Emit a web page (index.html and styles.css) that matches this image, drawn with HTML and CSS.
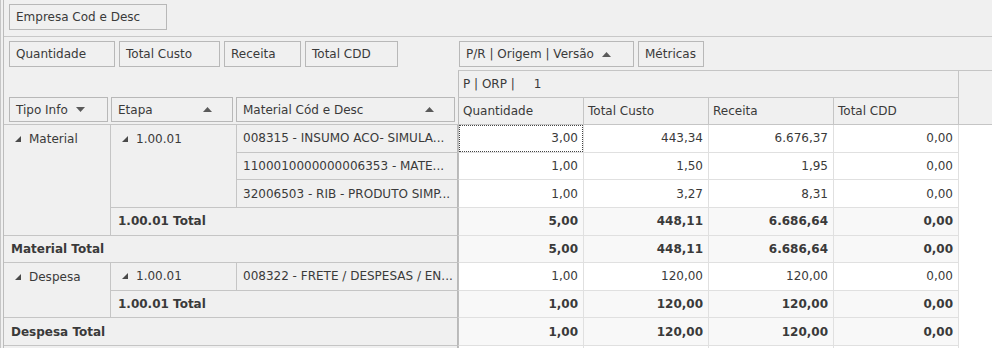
FILE: index.html
```html
<!DOCTYPE html>
<html>
<head>
<meta charset="utf-8">
<link rel="stylesheet" href="styles.css">
</head>
<body>
<div class="pivot">
  <div class="grid">
    <div class="filter-area">
      <div class="fbtn w-empresa">Empresa Cod e Desc</div>
    </div>

    <div class="data-fields">
      <div class="fbtn w-qtd">Quantidade</div>
      <div class="fbtn w-custo">Total Custo</div>
      <div class="fbtn w-receita">Receita</div>
      <div class="fbtn w-cdd">Total CDD</div>
    </div>

    <div class="col-fields">
      <div class="fbtn w-pr">P/R | Origem | Versão
        <svg class="sort after" width="9" height="5" viewBox="0 0 9 5"><polygon points="0,5 4.5,0 9,5" /></svg>
      </div>
      <div class="fbtn w-metricas">Métricas</div>
    </div>

    <div class="row-fields">
      <div class="fbtn rbtn w-tipo">Tipo Info
        <svg class="sort after" width="9" height="5" viewBox="0 0 9 5"><polygon points="0,0 9,0 4.5,5" /></svg>
      </div>
      <div class="fbtn rbtn w-etapa">Etapa
        <svg class="sort end" width="9" height="5" viewBox="0 0 9 5"><polygon points="0,5 4.5,0 9,5" /></svg>
      </div>
      <div class="fbtn rbtn w-material">Material Cód e Desc
        <svg class="sort end" width="9" height="5" viewBox="0 0 9 5"><polygon points="0,5 4.5,0 9,5" /></svg>
      </div>
    </div>

    <div class="ch-top">P | ORP |<span class="ch-val">1</span></div>
    <div class="ch-gt"></div>

    <!-- row header area -->
    <div class="rh top pos-mat"><div class="lbl"><svg class="exp" width="6" height="6" viewBox="0 0 6 6"><polygon points="6,0 6,6 0,6" /></svg>Material</div></div>
    <div class="rh top pos-et1"><div class="lbl"><svg class="exp" width="6" height="6" viewBox="0 0 6 6"><polygon points="6,0 6,6 0,6" /></svg>1.00.01</div></div>
    <div class="rh mat pos-m1">008315 - INSUMO ACO- SIMULA...</div>
    <div class="rh mat pos-m2">1100010000000006353 - MATE...</div>
    <div class="rh mat pos-m3">32006503 - RIB - PRODUTO SIMP...</div>
    <div class="rh mat tot pos-ett1">1.00.01 Total</div>
    <div class="rh mat tot pos-matt">Material Total</div>
    <div class="rh top pos-desp"><div class="lbl"><svg class="exp" width="6" height="6" viewBox="0 0 6 6"><polygon points="6,0 6,6 0,6" /></svg>Despesa</div></div>
    <div class="rh pos-et2"><svg class="exp" width="6" height="6" viewBox="0 0 6 6"><polygon points="6,0 6,6 0,6" /></svg>1.00.01</div>
    <div class="rh mat pos-m4">008322 - FRETE / DESPESAS / EN...</div>
    <div class="rh mat tot pos-ett2">1.00.01 Total</div>
    <div class="rh mat tot pos-despt">Despesa Total</div>
    <div class="rh mat last pos-next"></div>

    <!-- measure headers (row 4) -->
    <div class="mh first">Quantidade</div>
    <div class="mh">Total Custo</div>
    <div class="mh">Receita</div>
    <div class="mh">Total CDD</div>

    <!-- data rows -->
    <div class="d first focus">3,00</div><div class="d">443,34</div><div class="d">6.676,37</div><div class="d">0,00</div><div class="gt"></div>
    <div class="d first">1,00</div><div class="d">1,50</div><div class="d">1,95</div><div class="d">0,00</div><div class="gt"></div>
    <div class="d first">1,00</div><div class="d">3,27</div><div class="d">8,31</div><div class="d">0,00</div><div class="gt"></div>
    <div class="d first tot">5,00</div><div class="d tot">448,11</div><div class="d tot">6.686,64</div><div class="d tot">0,00</div><div class="gt"></div>
    <div class="d first tot">5,00</div><div class="d tot">448,11</div><div class="d tot">6.686,64</div><div class="d tot">0,00</div><div class="gt"></div>
    <div class="d first">1,00</div><div class="d">120,00</div><div class="d">120,00</div><div class="d">0,00</div><div class="gt"></div>
    <div class="d first tot">1,00</div><div class="d tot">120,00</div><div class="d tot">120,00</div><div class="d tot">0,00</div><div class="gt"></div>
    <div class="d first tot">1,00</div><div class="d tot">120,00</div><div class="d tot">120,00</div><div class="d tot">0,00</div><div class="gt"></div>
    <div class="d first last"></div><div class="d last"></div><div class="d last"></div><div class="d last"></div><div class="gt"></div>
  </div>
</div>
</body>
</html>
```

FILE: styles.css
```css
* { box-sizing: border-box; }

html, body {
  margin: 0;
  padding: 0;
}

body {
  width: 992px;
  height: 348px;
  overflow: hidden;
  background: #f0f0f0;
  font-family: "DejaVu Sans", Verdana, sans-serif;
  font-size: 12px;
  color: #3a3a3a;
}

.pivot {
  height: 348px;
  border-left: 1px solid #c6c6c6;
  padding-left: 2px;
}

.grid {
  display: grid;
  height: 100%;
  border-left: 1px solid #bcbcbc;
  grid-template-columns: 107px 126px 221px 126px 125px 125px 125px 1fr;
  grid-template-rows: 37px 33px 28px 27px repeat(8, 27.625px) 2px;
}

/* ---------- field buttons ---------- */
.fbtn {
  height: 26px;
  border: 1px solid #b8b8b8;
  background: #f0f0f0;
  display: flex;
  align-items: center;
  padding: 0 6px;
  white-space: nowrap;
  flex: none;
}
.rbtn { height: 25px; }

.sort { fill: #5a5a5a; flex: none; }
.sort.after { margin-left: 8px; }
.sort.end { margin-left: auto; margin-right: 14px; }

.w-empresa { width: 158px; }
.w-qtd { width: 106px; }
.w-custo { width: 101px; }
.w-receita { width: 77px; }
.w-cdd { width: 93px; }
.w-pr { width: 175px; }
.w-metricas { width: 66px; }
.w-tipo { width: 99px; }
.w-etapa { width: 122px; }
.w-material { width: 219px; }

.filter-area {
  grid-column: 1 / -1;
  grid-row: 1;
  border-bottom: 1px solid #c8c8c8;
  padding: 4px 0 0 5px;
  display: flex;
  align-items: flex-start;
}

.data-fields {
  grid-column: 1 / 4;
  grid-row: 2;
  display: flex;
  align-items: flex-start;
  gap: 4px;
  padding: 4px 0 0 5px;
}

.col-fields {
  grid-column: 4 / -1;
  grid-row: 2;
  display: flex;
  align-items: flex-start;
  gap: 4px;
  padding: 4px 0 0 1px;
}

.row-fields {
  grid-column: 1 / 4;
  grid-row: 3 / 5;
  display: flex;
  align-items: flex-end;
  gap: 3px;
  padding: 0 0 2px 5px;
  border-bottom: 1px solid #c5c5c5;
}

/* ---------- column header area ---------- */
.ch-top {
  grid-column: 4 / 8;
  grid-row: 3;
  border-top: 1px solid #c5c5c5;
  border-left: 1px solid #bdbdbd;
  border-right: 1px solid #c5c5c5;
  border-bottom: 1px solid #c5c5c5;
  display: flex;
  align-items: center;
  padding-left: 4px;
  white-space: pre;
}
.ch-val { margin-left: 19px; }

.ch-gt {
  grid-column: 8;
  grid-row: 3 / 5;
  border-top: 1px solid #c5c5c5;
  border-bottom: 1px solid #c5c5c5;
}

.mh {
  border-right: 1px solid #c5c5c5;
  border-bottom: 1px solid #c5c5c5;
  display: flex;
  align-items: center;
  padding-left: 4px;
  white-space: nowrap;
}
.mh.first { border-left: 1px solid #bdbdbd; }

/* ---------- row header cells ---------- */
.rh {
  background: #f0f0f0;
  border-right: 1px solid #c5c5c5;
  border-bottom: 1px solid #c5c5c5;
  display: flex;
  align-items: center;
  padding: 0 6px 0 11px;
  white-space: nowrap;
  overflow: hidden;
}
.rh.top { align-items: flex-start; }
.rh .lbl {
  height: 27px;
  display: flex;
  align-items: center;
}
.exp { fill: #4a4a4a; margin-right: 8px; flex: none; }

.rh.mat {
  border-right-color: #b9b9b9;
  padding-left: 6px;
}
.rh.tot { font-weight: bold; padding-left: 7px; }

.pos-mat { grid-column: 1; grid-row: 5 / 9; }
.pos-et1 { grid-column: 2; grid-row: 5 / 8; }
.pos-m1 { grid-column: 3; grid-row: 5; }
.pos-m2 { grid-column: 3; grid-row: 6; }
.pos-m3 { grid-column: 3; grid-row: 7; }
.pos-ett1 { grid-column: 2 / 4; grid-row: 8; padding-left: 9px; }
.pos-matt { grid-column: 1 / 4; grid-row: 9; }
.pos-desp { grid-column: 1; grid-row: 10 / 12; }
.pos-et2 { grid-column: 2; grid-row: 10; }
.pos-m4 { grid-column: 3; grid-row: 10; }
.pos-ett2 { grid-column: 2 / 4; grid-row: 11; padding-left: 9px; }
.pos-despt { grid-column: 1 / 4; grid-row: 12; }
.pos-next { grid-column: 1 / 4; grid-row: 13; }

/* ---------- data cells ---------- */
.d {
  background: #ffffff;
  border-right: 1px solid #e0e0e0;
  border-bottom: 1px solid #e0e0e0;
  display: flex;
  align-items: center;
  justify-content: flex-end;
  padding-right: 5px;
  white-space: nowrap;
  color: #3a3a3a;
}
.d.first { border-left: 1px solid #bdbdbd; }
.d.tot {
  background: #f8f8f8;
  font-weight: bold;
}
.gt { background: #ffffff; }

.last { border-bottom: none; }
.rh.last { border-bottom: none; }
.d.last { border-bottom: none; }

.focus { position: relative; }
.focus::after {
  content: "";
  position: absolute;
  left: 0;
  top: 0;
  right: 0;
  bottom: 0;
  border: 1px dotted #444;
}
```
